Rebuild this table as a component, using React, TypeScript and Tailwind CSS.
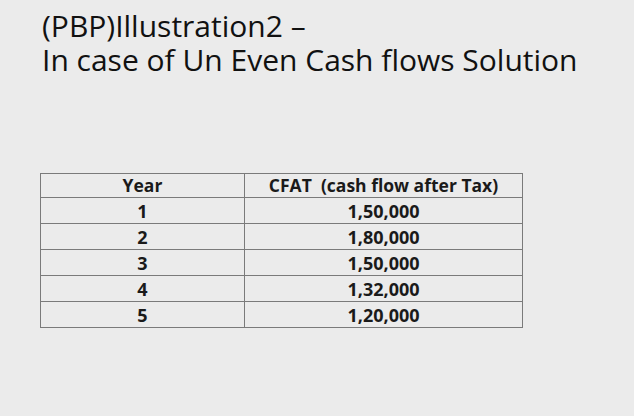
export default function App() {
  const rows = [
    ["1", "1,50,000"],
    ["2", "1,80,000"],
    ["3", "1,50,000"],
    ["4", "1,32,000"],
    ["5", "1,20,000"],
  ];
  return (
    <div
      className="w-[634px] h-[416px] bg-[#ebebeb] text-[#111] overflow-hidden [font-variant-ligatures:none]"
      style={{ fontFamily: "'Open Sans', Lato, sans-serif" }}
    >
      <div className="pl-[42px] pt-[9px] text-[30px] leading-[34px]">
        <div>(PBP)Illustration2 –</div>
        <div>In case of Un Even Cash flows Solution</div>
      </div>
      <div className="pl-[40px] pt-[96px]">
        <table className="border-collapse font-bold text-[#1a1a1a]">
          <tbody>
            <tr className="h-[24px] text-[17.5px]">
              <td className="w-[204px] border border-[#7a7a7a] text-center p-0 leading-none">Year</td>
              <td className="w-[278px] border border-[#7a7a7a] text-center p-0 leading-none whitespace-pre">CFAT  (cash flow after Tax)</td>
            </tr>
            {rows.map(([y, v]) => (
              <tr key={y} className="h-[26px] text-[18px]">
                <td className="border border-[#7a7a7a] text-center p-0 leading-none">{y}</td>
                <td className="border border-[#7a7a7a] text-center p-0 leading-none">{v}</td>
              </tr>
            ))}
          </tbody>
        </table>
      </div>
    </div>
  );
}
